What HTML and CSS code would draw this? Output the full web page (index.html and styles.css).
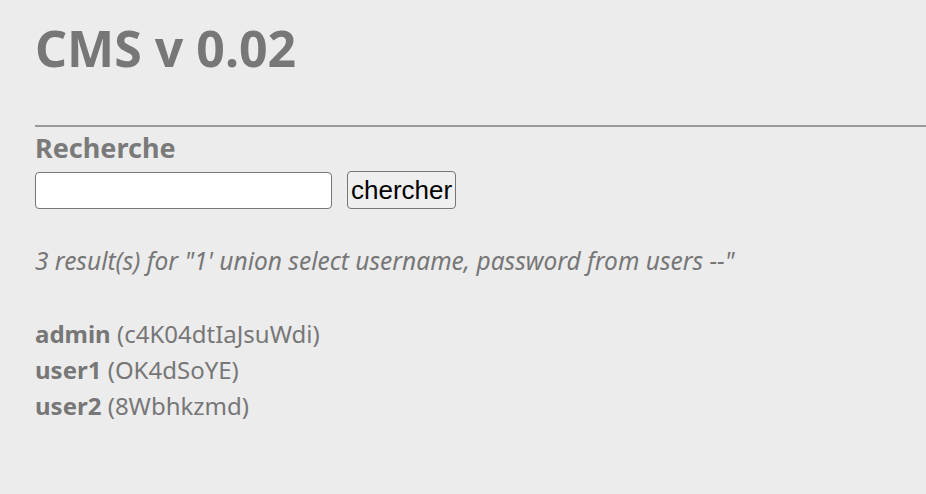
FILE: index.html
```html
<!DOCTYPE html>
<html lang="fr">
<head>
<meta charset="utf-8">
<title>CMS v 0.02</title>
<link rel="stylesheet" href="styles.css">
</head>
<body>
<header class="header">
  <h1 class="title">CMS v 0.02</h1>
</header>
<hr class="rule">
<section class="search">
  <h2 class="search-title">Recherche</h2>
  <form class="search-form">
    <input class="search-input" type="text">
    <button class="search-button" type="button">chercher</button>
  </form>
  <p class="summary">3 result(s) for "1' union select username, password from users --"</p>
  <ul class="results">
    <li class="result"><b class="user">admin</b> (c4K04dtIaJsuWdi)</li>
    <li class="result"><b class="user">user1</b> (OK4dSoYE)</li>
    <li class="result"><b class="user">user2</b> (8Wbhkzmd)</li>
  </ul>
</section>
</body>
</html>
```
FILE: styles.css
```css
html, body {
  margin: 0;
  padding: 0;
  background: #ececec;
}
body {
  font-family: "Noto Sans", "Open Sans", sans-serif;
  color: #777;
  padding-left: 35px;
  overflow: hidden;
}
.header {
  padding-top: 16px;
}
.title {
  margin: 0;
  font-size: 50px;
  line-height: 64px;
  font-weight: 700;
  color: #777;
}
.rule {
  margin: 45px 0 0 0;
  border: 0;
  height: 2px;
  background: #999;
}
.search-title {
  margin: 1px 0 0 0;
  font-size: 27px;
  line-height: 40px;
  font-weight: 700;
  color: #7a7a7a;
}
.search-form {
  display: flex;
  align-items: center;
  gap: 15px;
  margin-top: 3px;
}
.search-input {
  box-sizing: border-box;
  width: 297px;
  height: 37px;
  border: 1.5px solid #767676;
  border-radius: 4px;
  background: #fff;
  margin: 0;
}
.search-button {
  box-sizing: border-box;
  height: 38px;
  padding: 0 3px;
  margin: 0;
  font-family: "Liberation Sans", Arial, sans-serif;
  font-size: 26px;
  color: #000;
  background: #efefef;
  border: 1.5px solid #767676;
  border-radius: 4px;
}
.summary {
  margin: 34px 0 0 0;
  font-size: 24.5px;
  line-height: 36px;
  font-style: italic;
  color: #777;
}
.results {
  list-style: none;
  margin: 37px 0 0 0;
  padding: 0;
}
.result {
  font-size: 24px;
  line-height: 36px;
}
.user {
  font-weight: 700;
}
```
